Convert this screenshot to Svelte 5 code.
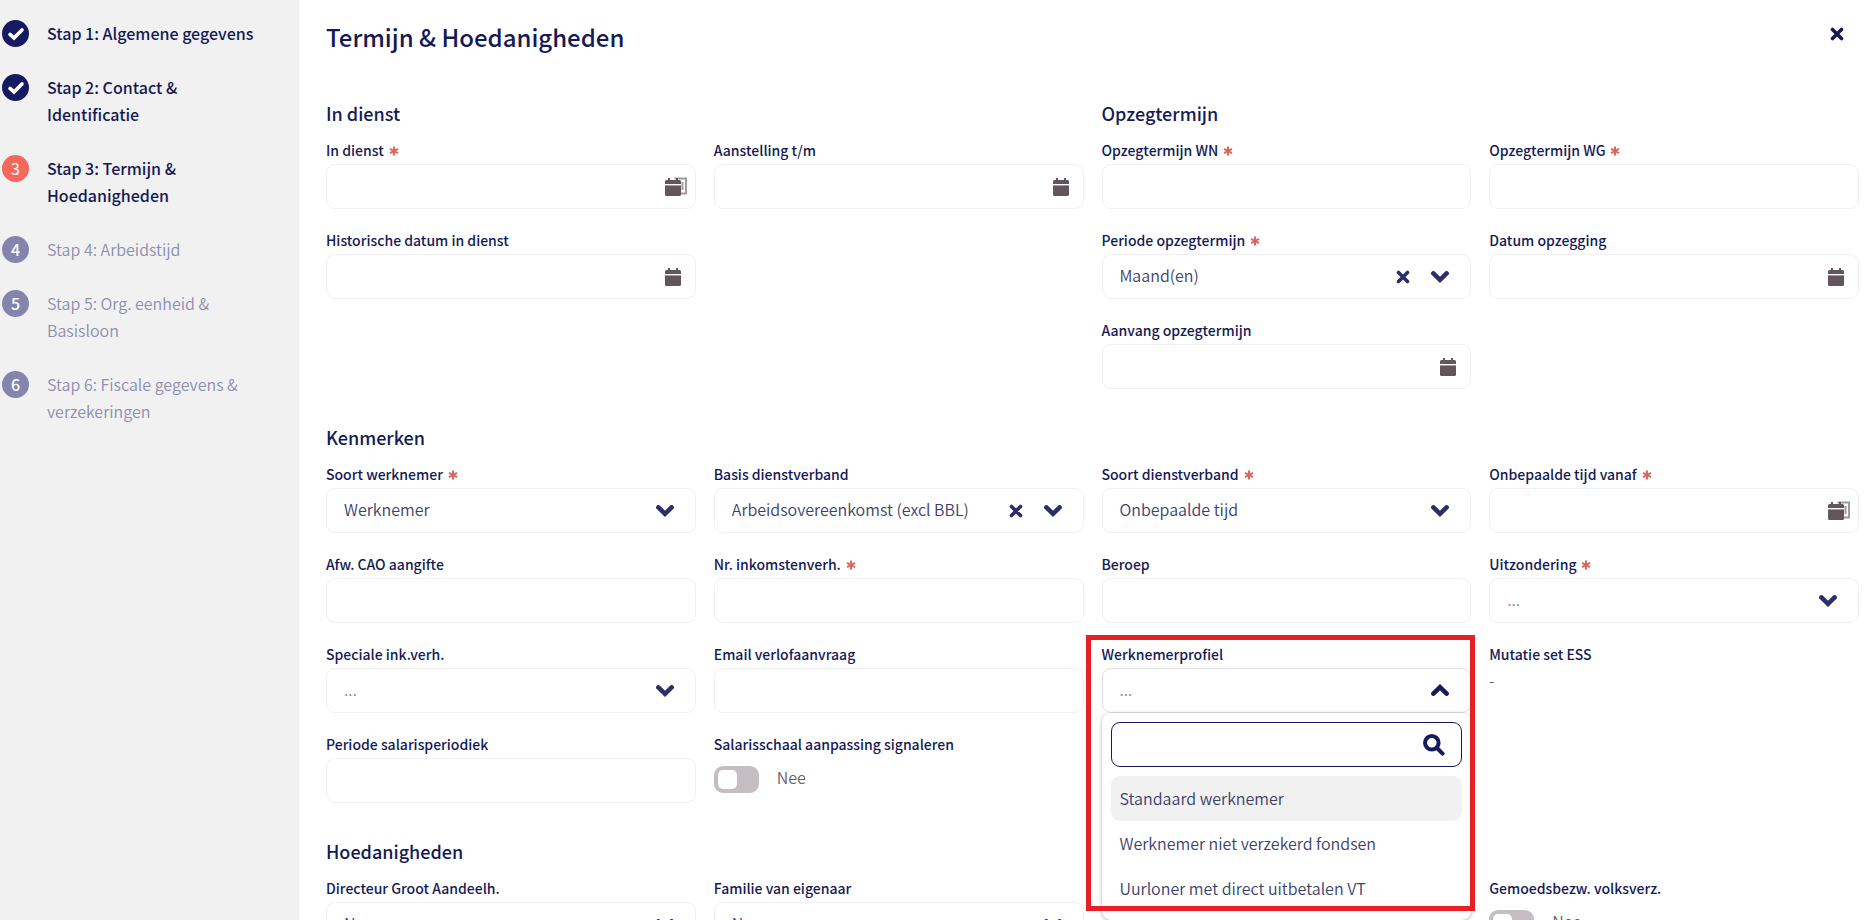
<script lang="ts">
  interface Field {
    id: string;
    label: string;
    kind: 'text' | 'date' | 'select' | 'toggle' | 'readonly' | 'picker';
    required?: boolean;
    copy?: boolean;
    clearable?: boolean;
    value?: string;
    column?: 'first' | 'last';
  }

  interface Step {
    title: string;
    state: 'done' | 'current' | 'todo';
  }

  const steps: Step[] = [
    { title: 'Stap 1: Algemene gegevens', state: 'done' },
    { title: 'Stap 2: Contact & Identificatie', state: 'done' },
    { title: 'Stap 3: Termijn & Hoedanigheden', state: 'current' },
    { title: 'Stap 4: Arbeidstijd', state: 'todo' },
    { title: 'Stap 5: Org. eenheid & Basisloon', state: 'todo' },
    { title: 'Stap 6: Fiscale gegevens & verzekeringen', state: 'todo' }
  ];

  const employment: Field[] = [
    { id: 'in-dienst', label: 'In dienst', kind: 'date', required: true, copy: true },
    { id: 'aanstelling', label: 'Aanstelling t/m', kind: 'date' },
    { id: 'historisch', label: 'Historische datum in dienst', kind: 'date' }
  ];

  const notice: Field[] = [
    { id: 'termijn-wn', label: 'Opzegtermijn WN', kind: 'text', required: true },
    { id: 'termijn-wg', label: 'Opzegtermijn WG', kind: 'text', required: true },
    { id: 'periode', label: 'Periode opzegtermijn', kind: 'select', required: true, clearable: true, value: 'Maand(en)' },
    { id: 'datum-opzegging', label: 'Datum opzegging', kind: 'date' },
    { id: 'aanvang', label: 'Aanvang opzegtermijn', kind: 'date' }
  ];

  const traits: Field[] = [
    { id: 'soort-wn', label: 'Soort werknemer', kind: 'select', required: true, value: 'Werknemer' },
    { id: 'basis', label: 'Basis dienstverband', kind: 'select', clearable: true, value: 'Arbeidsovereenkomst (excl BBL)' },
    { id: 'soort-dv', label: 'Soort dienstverband', kind: 'select', required: true, value: 'Onbepaalde tijd' },
    { id: 'vanaf', label: 'Onbepaalde tijd vanaf', kind: 'date', required: true, copy: true },
    { id: 'cao', label: 'Afw. CAO aangifte', kind: 'text' },
    { id: 'ikv', label: 'Nr. inkomstenverh.', kind: 'text', required: true },
    { id: 'beroep', label: 'Beroep', kind: 'text' },
    { id: 'uitzondering', label: 'Uitzondering', kind: 'select', required: true },
    { id: 'speciaal', label: 'Speciale ink.verh.', kind: 'select' },
    { id: 'email', label: 'Email verlofaanvraag', kind: 'text' },
    { id: 'profiel', label: 'Werknemerprofiel', kind: 'picker' },
    { id: 'mutatie', label: 'Mutatie set ESS', kind: 'readonly', value: '-' },
    { id: 'periodiek', label: 'Periode salarisperiodiek', kind: 'text' },
    { id: 'schaal', label: 'Salarisschaal aanpassing signaleren', kind: 'toggle' }
  ];

  const capacities: Field[] = [
    { id: 'dga', label: 'Directeur Groot Aandeelh.', kind: 'select', value: 'Nee' },
    { id: 'familie', label: 'Familie van eigenaar', kind: 'select', value: 'Nee' },
    { id: 'gemoeds', label: 'Gemoedsbezw. volksverz.', kind: 'toggle', column: 'last' }
  ];

  const profiles = [
    'Standaard werknemer',
    'Werknemer niet verzekerd fondsen',
    'Uurloner met direct uitbetalen VT'
  ];

  let open = $state(true);
  let query = $state('');
  let profile = $state('');
  let switches: Record<string, boolean> = $state({ schaal: false, gemoeds: false });

  let matches = $derived(
    profiles.filter((p) => p.toLowerCase().includes(query.toLowerCase()))
  );

  function choose(name: string) {
    profile = name;
    open = false;
  }
</script>

{#snippet cross()}
  <svg class="cross" viewBox="0 0 14 14" aria-hidden="true">
    <path d="M2.5 2.5l9 9M11.5 2.5l-9 9" />
  </svg>
{/snippet}

{#snippet chevron(up: boolean)}
  <svg class="chevron" viewBox="0 0 18 12" aria-hidden="true">
    {#if up}
      <path d="M2.4 9.600L9 3.2l6.600 6.4" />
    {:else}
      <path d="M2.4 2.400L9 8.8l6.600-6.4" />
    {/if}
  </svg>
{/snippet}

{#snippet fieldBox(f: Field)}
  <div class="field" class:last={f.column === 'last'}>
    <label class="label" for={f.id} id="{f.id}-label">
      {f.label}
      {#if f.required}
        <svg class="star" viewBox="0 0 10 10" aria-hidden="true">
          <path d="M5 .6v8.8M1 2.8l8 4.4M9 2.8l-8 4.4" />
        </svg>
      {/if}
    </label>

    {#if f.kind === 'text'}
      <input class="box" id={f.id} type="text" />
    {:else if f.kind === 'date'}
      <div class="control">
        <input class="box" id={f.id} type="text" />
        <button class="calendar" type="button" aria-label="Kies datum">
          <svg viewBox="0 0 24 20" aria-hidden="true">
            {#if f.copy}
              <path class="sheet" d="M9.5 1.500h11.500v15H16M17.500 5v8" />
            {/if}
            <path class="back" d="M0 7V4.5Q0 3 1.500 3H3V1.200Q3 1 3.300 1H4.700Q5 1 5 1.300V3h6V1.300Q11 1 11.300 1h1.400Q13 1 13 1.300V3h1.500Q16 3 16 4.500V7z" />
            <path class="back" d="M0 8.200h16v9.300Q16 19 14.500 19h-13Q0 19 0 17.500z" />
            <path class="gap" d="M0 7h16v1.200H0z" />
          </svg>
        </button>
      </div>
    {:else if f.kind === 'select'}
      <div class="control">
        <select class="box" class:empty={!f.value} id={f.id}>
          <option>{f.value ?? '...'}</option>
        </select>
        <div class="icons">
          {#if f.clearable}
            <button type="button" aria-label="Wissen">{@render cross()}</button>
          {/if}
          {@render chevron(false)}
        </div>
      </div>
    {:else if f.kind === 'toggle'}
      <div class="toggle">
        <input id={f.id} type="checkbox" role="switch" bind:checked={switches[f.id]} />
        <span>{switches[f.id] ? 'Ja' : 'Nee'}</span>
      </div>
    {:else if f.kind === 'readonly'}
      <output class="readonly" id={f.id}>{f.value}</output>
    {:else}
      <button
        class="box picker"
        class:empty={!profile}
        id={f.id}
        type="button"
        aria-haspopup="listbox"
        aria-expanded={open}
        onclick={() => (open = !open)}
      >
        <span>{profile || '...'}</span>
        {@render chevron(open)}
      </button>
      {#if open}
        <div class="menu">
          <div class="control">
            <input class="box search" type="text" aria-label="Zoeken" bind:value={query} />
            <svg class="glass" viewBox="0 0 22 22" aria-hidden="true">
              <circle cx="8.800" cy="8.800" r="6.800" />
              <path d="M14 14l5.600 5.600" />
            </svg>
          </div>
          <ul role="listbox" aria-labelledby="{f.id}-label">
            {#each matches as name, i}
              <li role="option" aria-selected={profile === name}>
                <button class="option" class:active={i === 0} type="button" onclick={() => choose(name)}>
                  {name}
                </button>
              </li>
            {/each}
          </ul>
        </div>
      {/if}
      <div class="highlight"></div>
    {/if}
  </div>
{/snippet}

<div class="wizard">
  <nav class="sidebar" aria-label="Stappen">
    <ol>
      {#each steps as step, i}
        <li class="step {step.state}">
          <span class="bullet">
            {#if step.state === 'done'}
              <svg viewBox="0 0 18 14" aria-label="Voltooid">
                <path d="M3 7.400l4 3.700L15 2.900" />
              </svg>
            {:else}
              {i + 1}
            {/if}
          </span>
          <span class="step-title">{step.title}</span>
        </li>
      {/each}
    </ol>
  </nav>

  <main>
    <header>
      <h1>Termijn &amp; Hoedanigheden</h1>
      <button class="close" type="button" aria-label="Sluiten">{@render cross()}</button>
    </header>

    <form>
      <div class="halves">
        <section>
          <h2>In dienst</h2>
          <div class="grid two">
            {#each employment as f}{@render fieldBox(f)}{/each}
          </div>
        </section>
        <section>
          <h2>Opzegtermijn</h2>
          <div class="grid two">
            {#each notice as f}{@render fieldBox(f)}{/each}
          </div>
        </section>
      </div>

      <section>
        <h2>Kenmerken</h2>
        <div class="grid four">
          {#each traits as f}{@render fieldBox(f)}{/each}
        </div>
      </section>

      <section>
        <h2>Hoedanigheden</h2>
        <div class="grid four">
          {#each capacities as f}{@render fieldBox(f)}{/each}
        </div>
      </section>
    </form>
  </main>
</div>

<style>
  :global(body) {
    margin: 0;
    background: #fff;
  }

  .wizard {
    --navy: #161a60;
    --ink: #151a56;
    --line: #f1f1f1;
    display: flex;
    height: 100vh;
    overflow: hidden;
    color: var(--ink);
    font-family: 'Noto Sans CJK SC', 'Open Sans', sans-serif;
    font-size: 16px;
    line-height: 27px;
  }

  .wizard * {
    box-sizing: border-box;
  }

  button,
  input,
  select {
    font: inherit;
    color: inherit;
  }

  button {
    margin: 0;
    padding: 0;
    border: 0;
    background: none;
    cursor: pointer;
  }

  ol,
  ul {
    margin: 0;
    padding: 0;
    list-style: none;
  }

  /* Sidebar */
  .sidebar {
    flex: 0 0 299px;
    padding: 20px 36px 0 2px;
    background: #f1f1f1;
  }

  .sidebar ol {
    display: flex;
    flex-direction: column;
    gap: 27px;
  }

  .step {
    display: flex;
    gap: 18px;
    font-weight: 500;
  }

  .bullet {
    display: flex;
    flex: 0 0 27px;
    align-items: center;
    justify-content: center;
    height: 27px;
    border-radius: 50%;
    background: var(--navy);
    color: #fff;
    font-size: 16px;
  }

  .bullet svg {
    width: 18px;
    height: 14px;
  }

  .bullet path {
    fill: none;
    stroke: #fff;
    stroke-width: 3.600;
    stroke-linecap: round;
    stroke-linejoin: miter;
  }

  .current .bullet {
    background: #f4695c;
    font-weight: 400;
  }

  .todo .bullet {
    background: #8584ae;
  }

  .todo .step-title {
    color: #8e8db0;
    font-weight: 350;
  }

  /* Content */
  main {
    flex: 1;
    min-width: 0;
    padding: 20px 14px 36px 27px;
    overflow-y: auto;
    scrollbar-width: none;
  }

  header {
    display: flex;
    justify-content: space-between;
    height: 36px;
    margin-bottom: 45px;
  }

  h1 {
    margin: 0;
    font-size: 24px;
    font-weight: 500;
    line-height: 34px;
  }

  h2 {
    margin: 0 0 11px;
    font-size: 18px;
    font-weight: 500;
    line-height: 25px;
  }

  .close {
    display: flex;
    align-items: center;
    height: 28px;
    padding: 0 15px;
  }

  form {
    display: flex;
    flex-direction: column;
    gap: 36px;
  }

  .halves,
  .grid {
    display: grid;
    gap: 18px;
  }

  .halves,
  .two {
    grid-template-columns: repeat(2, minmax(0, 1fr));
  }

  .four {
    grid-template-columns: repeat(4, minmax(0, 1fr));
  }

  .field {
    position: relative;
    height: 72px;
  }

  .last {
    grid-column: -2;
  }

  .label {
    display: flex;
    align-items: center;
    gap: 5px;
    font-size: 14px;
    font-weight: 500;
  }

  .star {
    width: 10px;
    height: 10px;
  }

  .star path {
    stroke: #da665c;
    stroke-width: 2;
  }

  .box {
    display: block;
    width: 100%;
    height: 45px;
    margin: 0;
    padding: 0 17px 2px;
    border: 1px solid var(--line);
    border-radius: 9px;
    outline: none;
    background: #fff;
    color: #3c3f6c;
    font-weight: 350;
    appearance: none;
  }

  .empty {
    color: #8c8c94;
  }

  .control {
    display: grid;
    align-items: center;
  }

  .control > * {
    grid-area: 1 / 1;
  }

  .icons {
    display: flex;
    align-items: center;
    justify-self: end;
    gap: 21px;
    margin-right: 22px;
    color: #2b2e69;
    pointer-events: none;
  }

  .icons button {
    display: flex;
    color: inherit;
    pointer-events: auto;
  }

  .chevron {
    width: 18px;
    height: 12px;
  }

  .cross {
    width: 14px;
    height: 14px;
  }

  .chevron path,
  .cross path {
    fill: none;
    stroke: currentColor;
    stroke-width: 4.600;
    stroke-linecap: round;
  }

  .cross path {
    stroke-width: 3.600;
  }

  .calendar {
    display: flex;
    justify-self: end;
    margin-right: 7px;
  }

  .calendar svg {
    width: 24px;
    height: 20px;
  }

  .calendar .back {
    fill: #63555c;
  }

  .calendar .gap {
    fill: #fff;
  }

  .calendar .sheet {
    fill: none;
    stroke: #a09a9d;
    stroke-width: 2;
  }

  .readonly {
    display: block;
    color: #5c555a;
    font-size: 14px;
    line-height: 24px;
  }

  .toggle {
    display: flex;
    gap: 18px;
    padding-top: 8px;
    color: #6a6267;
    font-weight: 350;
    line-height: 22px;
  }

  .toggle input {
    width: 45px;
    height: 27px;
    margin: 0;
    padding: 4px;
    border-radius: 9px;
    background: #c4bdc1;
    appearance: none;
    cursor: pointer;
  }

  .toggle input::before {
    display: block;
    width: 19px;
    height: 19px;
    border-radius: 5px;
    background: #fff;
    content: '';
  }

  .toggle input:checked {
    background: var(--navy);
  }

  .toggle input:checked::before {
    margin-left: 18px;
  }

  /* Searchable drop-down */
  .picker {
    display: flex;
    align-items: center;
    justify-content: space-between;
    padding-right: 21px;
    border-color: #dedede;
    text-align: left;
  }

  .picker .chevron {
    color: var(--navy);
  }

  .menu {
    position: absolute;
    z-index: 1;
    top: 100%;
    left: 0;
    right: 0;
    padding: 9px;
    border-radius: 9px;
    background: #fff;
    box-shadow: 0 1px 4px rgba(0, 0, 0, 0.3);
  }

  .menu .control {
    margin-bottom: 9px;
  }

  .search {
    border-color: var(--navy);
    padding-right: 45px;
  }

  .glass {
    justify-self: end;
    width: 22px;
    height: 22px;
    margin-right: 17px;
    pointer-events: none;
  }

  .glass * {
    fill: none;
    stroke: var(--navy);
    stroke-width: 4;
    stroke-linecap: round;
  }

  .option {
    width: 100%;
    height: 45px;
    padding: 0 9px;
    border-radius: 9px;
    color: #3c3f6c;
    font-weight: 350;
    text-align: left;
  }

  .option.active,
  .option:hover {
    background: #f1f1f1;
  }

  .highlight {
    position: absolute;
    z-index: 2;
    top: -6px;
    left: -16px;
    right: -4px;
    height: 276px;
    border: 5px solid #e81f27;
    pointer-events: none;
  }
</style>
